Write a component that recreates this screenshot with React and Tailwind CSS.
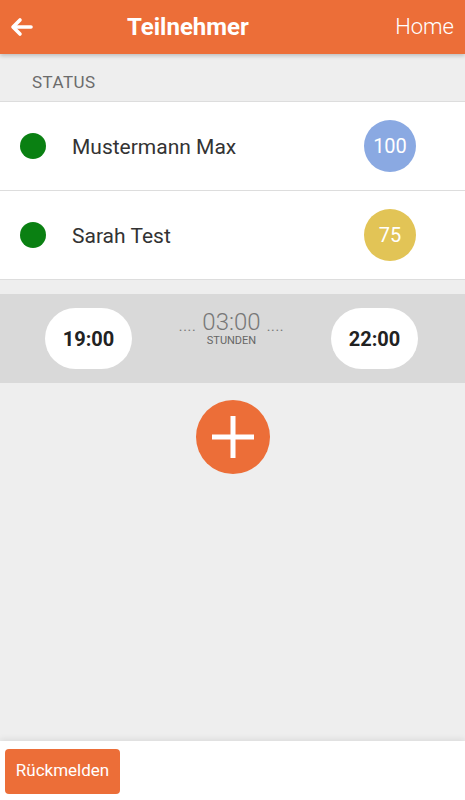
import React from 'react';

const people = [
  { name: 'Mustermann Max', score: 100, badge: 'bg-[#8AA9E2]' },
  { name: 'Sarah Test', score: 75, badge: 'bg-[#E2C456]' },
];

const App = () => {
  return (
    <div className="h-[800px] w-full flex flex-col bg-[#EEEEEE] font-['Roboto',sans-serif] overflow-hidden">
      {/* Header */}
      <header className="relative z-10 h-[54px] shrink-0 bg-[#EC6E38] flex items-center shadow-[0_2px_4px_rgba(0,0,0,0.2)]">
        <button className="w-[42px] h-full flex items-center justify-center pl-[2px]">
          <svg width="24" height="20" viewBox="0 0 24 20" fill="none" stroke="white" strokeWidth="3.6" strokeLinecap="round" strokeLinejoin="round">
            <path d="M21 10H4" />
            <path d="M10 3L3 10L10 17" />
          </svg>
        </button>
        <h1 className="ml-[85px] text-white text-[24px] font-bold leading-none">Teilnehmer</h1>
        <span className="ml-auto mr-[11px] text-white text-[22px] font-light leading-none">Home</span>
      </header>

      {/* Status label */}
      <div className="h-[47px] shrink-0 flex items-center pl-8 pt-[10px] text-[17px] text-[#6B6B6B] tracking-wide">STATUS</div>

      {/* Participants */}
      <ul className="bg-white border-t border-[#DDDDDD] shrink-0">
        {people.map((p) => (
          <li key={p.name} className="h-[89px] flex items-center border-b border-[#DDDDDD] pl-5 pr-[49px]">
            <span className="w-[26px] h-[26px] rounded-full bg-[#0A8012]" />
            <span className="ml-[26px] text-[21px] text-[#333333] pt-[3px]">{p.name}</span>
            <span className={`ml-auto w-[52px] h-[52px] rounded-full ${p.badge} flex items-center justify-center text-white text-[20px]`}>
              {p.score}
            </span>
          </li>
        ))}
      </ul>

      {/* Time bar */}
      <div className="mt-[14px] h-[89px] shrink-0 bg-[#D9D9D9] flex items-center justify-between pl-[45px] pr-[47px]">
        <div className="w-[87px] h-[61px] rounded-[31px] bg-white flex items-center justify-center text-[20px] font-bold text-[#222222]">19:00</div>
        <div className="flex items-start gap-[6px] text-[#777777] -mt-[20px]">
          <span className="text-[14px] mt-[5px] tracking-wider leading-[20px]">....</span>
          <div className="flex flex-col items-center">
            <span className="text-[24px] font-light leading-[23px]">03:00</span>
            <span className="text-[11px] leading-[11px] mt-[1px] text-[#666666]">STUNDEN</span>
          </div>
          <span className="text-[14px] mt-[5px] tracking-wider leading-[20px]">....</span>
        </div>
        <div className="w-[87px] h-[61px] rounded-[31px] bg-white flex items-center justify-center text-[20px] font-bold text-[#222222]">22:00</div>
      </div>

      {/* Add button */}
      <div className="flex justify-center pt-[17px]">
        <button className="w-[74px] h-[74px] rounded-full bg-[#EC6E38] flex items-center justify-center">
          <svg width="42" height="42" viewBox="0 0 42 42">
            <rect x="18.5" y="0" width="5" height="42" fill="white" />
            <rect x="0" y="18.5" width="42" height="5" fill="white" />
          </svg>
        </button>
      </div>

      <div className="flex-1" />

      {/* Footer */}
      <footer className="h-[59px] shrink-0 bg-white shadow-[0_-2px_6px_rgba(0,0,0,0.08)] flex items-center px-[5px] pb-[1px]">
        <button className="w-[115px] h-[45px] mt-[2px] rounded-[4px] bg-[#EC6E38] text-white text-[17px]">Rückmelden</button>
      </footer>
    </div>
  );
};

export default App;
